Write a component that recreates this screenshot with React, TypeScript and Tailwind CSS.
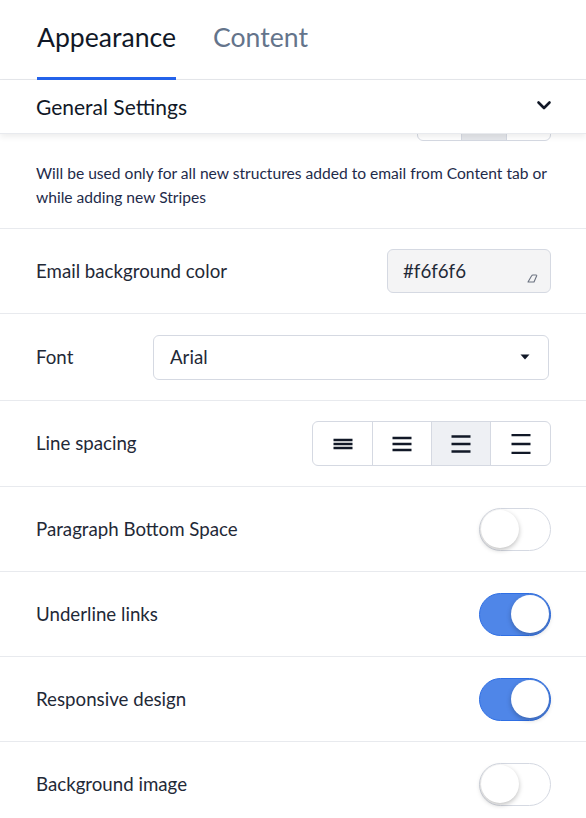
import React from "react";

function Toggle({ on }: { on: boolean }) {
  return (
    <div
      className={
        on
          ? "w-[72px] h-[43px] rounded-full border border-[#2f6fe4] bg-[#4f86e8] flex items-center justify-end p-[1px]"
          : "w-[72px] h-[43px] rounded-full border border-[#d5d9e2] bg-white flex items-center justify-start p-[1px]"
      }
    >
      <div className="w-[38px] h-[38px] rounded-full bg-white shadow-[0_2px_5px_rgba(0,0,0,0.25)]" />
    </div>
  );
}

function LinesIcon({ gap }: { gap: number }) {
  const total = gap * 2 + 3;
  const y0 = (20 - total) / 2 + 1.5;
  return (
    <svg width="20" height="20" viewBox="0 0 20 20">
      {[0, 1, 2].map((i) => (
        <line
          key={i}
          x1="0.5"
          x2="19.5"
          y1={y0 + i * gap}
          y2={y0 + i * gap}
          stroke="#111827"
          strokeWidth="2.6"
        />
      ))}
    </svg>
  );
}

function Row({ label, children, h }: { label: string; children?: React.ReactNode; h: string }) {
  return (
    <div className={`flex items-center justify-between border-b border-[#e8eaee] pl-[36px] pr-[35px] ${h}`}>
      <span className="text-[18.7px] text-[#1f2937]">{label}</span>
      {children}
    </div>
  );
}

export default function App() {
  return (
    <div
      className="w-[586px] h-[818px] overflow-hidden bg-white"
      style={{ fontFamily: "Lato, 'Noto Sans', sans-serif" }}
    >
      {/* Tabs */}
      <div className="flex h-[80px] border-b border-[#e5e7eb] pl-[37px] gap-[37px]">
        <div className="flex items-center h-[81px] -mb-[1px] border-b-[4px] border-[#2563eb] pb-[2px] text-[26.6px] text-[#111827]">
          Appearance
        </div>
        <div className="flex items-center h-[81px] -mb-[1px] pb-[6px] text-[26.6px] text-[#64748b]">
          Content
        </div>
      </div>

      {/* General settings header */}
      <div className="relative z-10 flex items-center justify-between h-[54px] pl-[36px] pr-[34px] bg-white shadow-[0_3px_6px_rgba(0,0,0,0.07)] border-b border-[#e8eaee]">
        <span className="text-[21px] text-[#111827]">General Settings</span>
        <svg width="16" height="16" viewBox="0 0 16 16" className="mb-[3px]">
          <path d="M2.5 5.5 L8 11 L13.5 5.5" fill="none" stroke="#111827" strokeWidth="2.6" strokeLinecap="round" strokeLinejoin="round" />
        </svg>
      </div>

      {/* peeking button group */}
      <div className="h-[7px] overflow-hidden flex items-end justify-end pr-[35px]">
        <div className="flex h-[44px] w-[134px] border border-[#d5d9e2] rounded-md overflow-hidden shrink-0">
          <div className="w-[44px] border-r border-[#d5d9e2]" />
          <div className="w-[45px] border-r border-[#d5d9e2] bg-[#e5e7eb]" />
          <div className="flex-1" />
        </div>
      </div>

      {/* description */}
      <div className="pl-[36px] pr-[28px] pt-[20px] pb-[19px] border-b border-[#e8eaee] text-[15.6px] leading-[24px] text-[#1e2b4a]">
        Will be used only for all new structures added to email from Content tab or while adding new Stripes
      </div>

      <Row label="Email background color" h="h-[85px]">
        <div className="relative w-[164px] h-[44px] rounded-md border border-[#d5d9e2] bg-[#f4f4f5] flex items-center pl-[15px] text-[18.7px] text-[#1f2937]">
          #f6f6f6
          <svg width="11" height="9" viewBox="0 0 11 9" className="absolute right-[12px] bottom-[9px]">
            <path d="M1 8 L4.5 2 Q5 1 6 1 L9 1 Q10 1 9.6 2 L7 8 Z" fill="none" stroke="#6b7280" strokeWidth="1.1" strokeLinejoin="round" />
          </svg>
        </div>
      </Row>

      <div className="flex items-center border-b border-[#e8eaee] pl-[36px] pr-[37px] h-[87px]">
        <span className="text-[18.7px] text-[#1f2937] w-[117px]">Font</span>
        <div className="flex-1 h-[45px] rounded-md border border-[#d5d9e2] flex items-center justify-between pl-[16px] pr-[18px] text-[18.7px] text-[#1f2937]">
          Arial
          <svg width="10" height="6" viewBox="0 0 10 6">
            <path d="M0.5 0.5 L9.5 0.5 L5 5.5 Z" fill="#111827" />
          </svg>
        </div>
      </div>

      <Row label="Line spacing" h="h-[86px]">
        <div className="flex h-[45px] w-[239px] rounded-md border border-[#d5d9e2] overflow-hidden">
          <div className="w-[60px] flex items-center justify-center border-r border-[#d5d9e2]">
            <LinesIcon gap={4} />
          </div>
          <div className="w-[59px] flex items-center justify-center border-r border-[#d5d9e2]">
            <LinesIcon gap={6} />
          </div>
          <div className="w-[59px] flex items-center justify-center border-r border-[#d5d9e2] bg-[#eef0f4]">
            <LinesIcon gap={7.5} />
          </div>
          <div className="flex-1 flex items-center justify-center">
            <LinesIcon gap={9} />
          </div>
        </div>
      </Row>

      <Row label="Paragraph Bottom Space" h="h-[85px]">
        <Toggle on={false} />
      </Row>
      <Row label="Underline links" h="h-[85px]">
        <Toggle on={true} />
      </Row>
      <Row label="Responsive design" h="h-[85px]">
        <Toggle on={true} />
      </Row>
      <Row label="Background image" h="h-[85px]">
        <Toggle on={false} />
      </Row>
    </div>
  );
}
